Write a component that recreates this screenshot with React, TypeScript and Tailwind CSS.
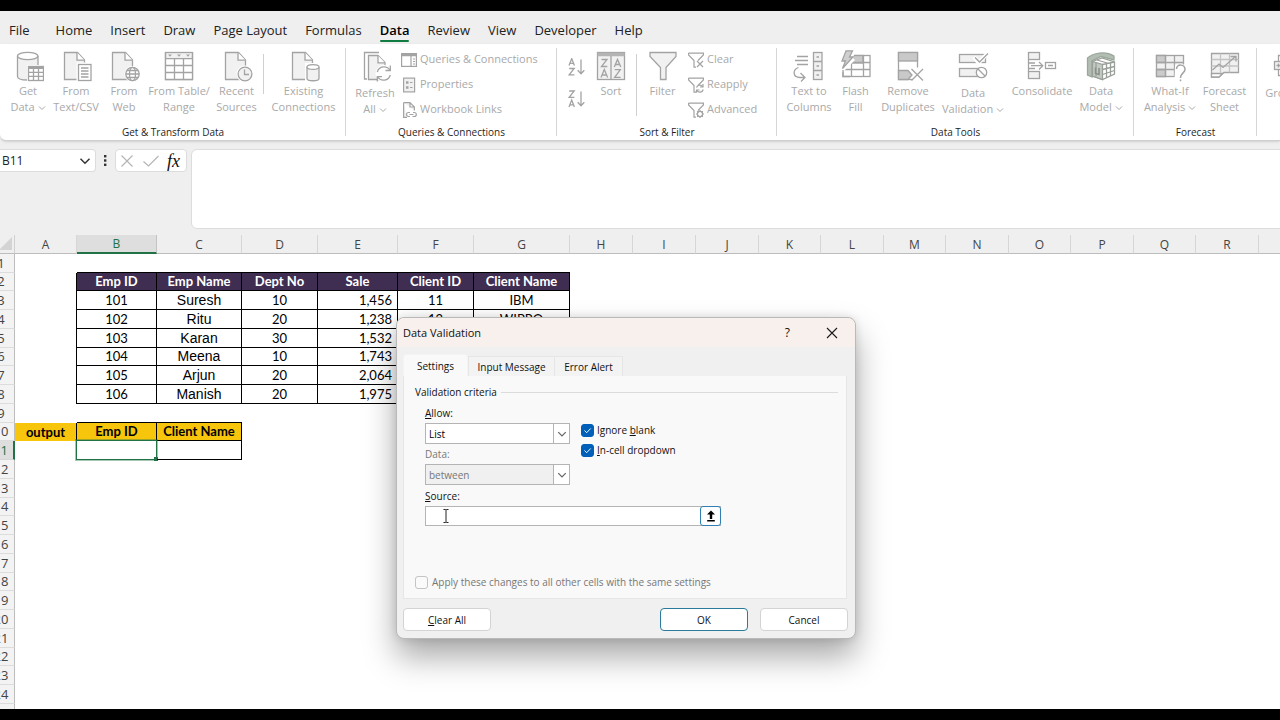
import React from "react";

const LINE = "#a3a3a3";
const FILL = "#f1f1f1";

/* ---------- icons ---------- */

function Svg32({ children }: { children: React.ReactNode }) {
  return (
    <svg width="32" height="32" viewBox="0 0 32 32" fill="none" stroke={LINE} strokeWidth="1.3" aria-hidden="true" className="shrink-0">
      {children}
    </svg>
  );
}

function Svg16({ children }: { children: React.ReactNode }) {
  return (
    <svg width="16" height="16" viewBox="0 0 16 16" fill="none" stroke={LINE} strokeWidth="1.2" aria-hidden="true" className="shrink-0">
      {children}
    </svg>
  );
}

function DocShape() {
  return (
    <>
      <path d="M4.5 2.5H17.5L24.5 10V29.5H4.5Z" fill={FILL} />
      <path d="M17 2.5V10.2H24.5" fill="#fff" />
    </>
  );
}

const GetDataIcon = () => (
  <Svg32>
    <path d="M5.5 6V26.5C5.500 28.8 10 30 15.500 30H26V6" fill={FILL} />
    <ellipse cx="15.7" cy="6" rx="10.2" ry="3.7" fill="#fff" />
    <rect x="15" y="15" width="17" height="17" fill="#fff" stroke="none" />
    <rect x="16.5" y="16.5" width="15" height="14" fill="#fff" />
    <path d="M16.5 17.7H31.5" strokeWidth="2.4" />
    <path d="M16.5 22.3H31.5M16.5 26.4H31.5M21.5 17V30.5M26.5 17V30.5" />
  </Svg32>
);

const TextCsvIcon = () => (
  <Svg32>
    <DocShape />
    <rect x="16.5" y="12.5" width="16" height="19.5" fill="#fff" stroke="none" />
    <rect x="18.5" y="14.5" width="12.5" height="16" fill="#fff" />
    <path d="M21 18H28.5M21 21H28.5M21 24H28.5M21 27H28.5" />
  </Svg32>
);

const WebIcon = () => (
  <Svg32>
    <DocShape />
    <circle cx="24.5" cy="24" r="8" fill="#fff" stroke="none" />
    <circle cx="24.5" cy="24" r="6.7" fill="#fff" />
    <ellipse cx="24.5" cy="24" rx="3" ry="6.7" />
    <path d="M17.8 24H31.2M19 20.5H30M19 27.5H30" />
  </Svg32>
);

const TableRangeIcon = () => (
  <Svg32>
    <rect x="2.5" y="2.5" width="27" height="27" fill={FILL} />
    <rect x="3" y="9" width="26" height="20" fill="#fff" stroke="none" />
    <path d="M2.5 8.7H29.5M2.5 15.5H29.5M2.5 22.5H29.5M11.5 8.7V29.5M20.5 8.7V29.5M2.5 2.5V29.5H29.5V2.5" />
    <path d="M5 4.5H9L7 6.8ZM14 4.5H18L16 6.8ZM23 4.5H27L25 6.8Z" fill={LINE} stroke="none" />
  </Svg32>
);

const RecentIcon = () => (
  <Svg32>
    <DocShape />
    <circle cx="24" cy="24" r="8.5" fill="#fff" stroke="none" />
    <circle cx="24" cy="24" r="6.9" fill={FILL} />
    <path d="M23.5 19.5V24.5H28" />
  </Svg32>
);

const ExistingIcon = () => (
  <Svg32>
    <DocShape />
    <rect x="17" y="13" width="15" height="19" fill="#fff" stroke="none" />
    <path d="M19 17V28.5C19 31.5 31 31.5 31 28.5V17" fill={FILL} />
    <ellipse cx="25" cy="17" rx="6" ry="2.4" fill="#fff" />
  </Svg32>
);

const RefreshIcon = () => (
  <Svg32>
    <path d="M20 2.5H5.5V29H8" />
    <path d="M9.5 5.5H19L26 12.5V29.5H9.5Z" fill={FILL} />
    <path d="M19 5.5V12.8H26" fill="#fff" />
    <circle cx="25" cy="23.5" r="8.5" fill="#fff" stroke="none" />
    <path d="M18.3 22A7 7 0 0 1 31 20.2M31.3 25A7 7 0 0 1 18.7 27" />
    <path d="M31.3 15.5V20.5H26.5M18.3 31.5V26.7H23" />
  </Svg32>
);

const SortIcon = () => (
  <Svg32>
    <rect x="2.5" y="2.5" width="27" height="27" fill={FILL} />
    <path d="M2.5 4.5H29.5" strokeWidth="3.6" stroke="#b4b4b4" />
    <path d="M16 6V29.5" />
    <path d="M6.5 9.5H12L6.5 16.5H12.3M6 27.5L9.3 19.5L12.6 27.5M7.2 25H11.5" />
    <path d="M19.3 17L22.5 9.5L25.8 17M20.5 14.5H24.7M19.7 19.7H25.3L19.7 27.3H25.6" />
  </Svg32>
);

const FilterIcon = () => (
  <Svg32>
    <path d="M3 2.5H29V6.5L19 17.5V29.5H13.5V17.5L3 6.5Z" fill={FILL} />
  </Svg32>
);

const TextColumnsIcon = () => (
  <Svg32>
    <path d="M4 6.5H15M2 10.5H15M4 14.5H15" />
    <path d="M5.5 17.5C-1 20 0 27.5 7 27.5H11M7.5 23L12 27.5L8 31.5" />
    <rect x="20.5" y="2.5" width="8.5" height="27" fill={FILL} />
    <path d="M20.5 11.5H29M20.5 20.5H29M23.5 7H26M23.5 16H26M23.5 25H26" />
  </Svg32>
);

const FlashFillIcon = () => (
  <Svg32>
    <rect x="3" y="5.5" width="27" height="21" fill="#fff" />
    <rect x="10" y="5.5" width="13" height="7.5" fill="#c9c9c9" />
    <path d="M3 12.5H30M3 19.5H30M11.5 5.5V26.5M23.5 5.5V26.5" />
    <path d="M-1 -1H16L13 8L15 10L3 22L-1 23Z" fill="#fff" stroke="none" />
    <path d="M6 .8H12.5L9.5 7H13L2.5 18.5L5.5 11H2Z" fill="#cfcfcf" />
    <path d="M3 20V26.5H10" />
  </Svg32>
);

const RemoveDuplicatesIcon = () => (
  <Svg32>
    <rect x="6.5" y="2.5" width="19" height="27" fill="#fff" />
    <rect x="6.5" y="2.5" width="19" height="8.5" fill="#c9c9c9" />
    <path d="M6.5 20.5H16L20 25L16 29.5H6.5Z" fill="#c9c9c9" />
    <path d="M19 17.5H33V32H19L23 25Z" fill="#fff" stroke="none" />
    <path d="M19.5 19L31 30.5M31 19L19.5 30.5" />
  </Svg32>
);

const ValidationIcon = () => (
  <Svg32>
    <rect x="2.5" y="4.5" width="26" height="8" fill={FILL} />
    <rect x="2.5" y="18.5" width="22" height="8" fill={FILL} />
    <path d="M17 7L21.5 13L31 3" stroke="#fff" strokeWidth="4" />
    <path d="M18 7.5L22.5 12L31 3.5" />
    <circle cx="24.5" cy="22.5" r="5.2" fill="#fff" />
    <path d="M21 19L28 26" />
  </Svg32>
);

const ConsolidateIcon = () => (
  <Svg32>
    <rect x="2.5" y="2.5" width="11" height="7" fill={FILL} />
    <rect x="2.5" y="21.5" width="11" height="7" fill={FILL} />
    <path d="M2.5 9.5V21.5M2.5 13H9M2.5 18.5H9M5 15.7H16.5M13 12L16.8 15.7L13 19.5" />
    <rect x="19.5" y="12.5" width="10" height="6" />
    <path d="M22 15.5H27" />
  </Svg32>
);

const ModelIcon = () => (
  <Svg32>
    <path d="M2.5 8C8 3 20 .5 29 6V10L16 6.5L7 11V27L2.5 25Z" fill="#b3bdb3" stroke="#9aa89a" />
    <path d="M7.5 11.5L17 8L29.5 12V24L17.5 29.5L7.5 26Z" fill="#fff" stroke="#9a9f9a" />
    <path d="M7.5 11.5L17.5 14.5V29.5L7.5 26Z" fill="#c3cac3" stroke="#9a9f9a" />
    <path d="M17.5 14.5L29.5 12M17.5 19.5L29.5 16.5M17.5 24.5L29.5 20.5M21.5 13.5V27.5M25.5 12.8V26M11 12.5V26.5M12 10L24 13.5" stroke="#9a9f9a" />
    <path d="M10.5 17.5V23.5L14 24.5V18" stroke="#8a8f8a" strokeWidth="1.6" />
  </Svg32>
);

const WhatIfIcon = () => (
  <Svg32>
    <rect x="2.5" y="5.5" width="27" height="21" fill={FILL} />
    <path d="M2.5 5.5H11.5V12.5H2.5ZM2.5 19.5H11.5V26.5H2.5Z" fill="#cbcbcb" />
    <path d="M2.5 12.5H29.5M2.5 19.5H29.5M11.5 5.5V26.5M20.5 5.5V26.5" />
    <path d="M21 14.5H33V32H20.5Z" fill="#fff" stroke="none" />
    <path d="M22.5 19C22.5 13.5 31 14 31 19.5C31 23 26.5 23 26.5 28M26.5 29.5V31.3" strokeWidth="1.5" />
  </Svg32>
);

const ForecastIcon = () => (
  <Svg32>
    <path d="M2.5 3.5H29.5V22.5H15L10 27H2.5Z" fill={FILL} />
    <path d="M2.5 9.5H29.5M2.5 16H29.5M11.5 3.5V22.5M20.5 3.5V22.5" stroke="#c4c4c4" />
    <path d="M3.5 20L10 14L14 17.5L26.5 6.5M21.5 6.5H27V11.5" />
    <path d="M2.5 23.5H13.5L10 27H2.5Z" fill="#fff" />
  </Svg32>
);

const GroupIcon = () => (
  <Svg32>
    <rect x="3.5" y="11.5" width="8" height="8" fill={FILL} />
    <path d="M5.5 15.5H9.5M7.5 13.5V17.5M7.5 11.5V5.5H12M7.5 19.5V25.5H12" />
    <rect x="10" y="3" width="19" height="6" fill={FILL} />
    <rect x="10" y="22" width="19" height="6" fill={FILL} />
  </Svg32>
);

const QueriesIcon = () => (
  <Svg16>
    <rect x=".6" y="1.6" width="14.8" height="12.8" fill="#fff" />
    <path d="M.6 3H15.4" strokeWidth="2.6" />
    <path d="M10 3V14.4" />
    <path d="M12 7H14M12 9.5H14M12 12H14" />
  </Svg16>
);
const PropertiesIcon = () => (
  <Svg16>
    <rect x="2.6" y="1.1" width="11" height="13.8" fill={FILL} />
    <path d="M5 5.5H7.5M5 10.5H7.5" strokeWidth="2.4" />
    <path d="M9 5.5H11.5M9 10.5H11.5" />
  </Svg16>
);
const LinksIcon = () => (
  <Svg16>
    <path d="M2.6 .6H9L13.4 5V8.5M6 15.4H2.6V.6M9 .6V5H13.4" fill={FILL} />
    <path d="M9 14.5H7.5A2 2 0 0 1 7.5 10.5H9M12 10.5H13.3A2 2 0 0 1 13.3 14.5H11.5M8.5 12.5H12.5" />
  </Svg16>
);
const Funnel = () => <path d="M.6 1.1H15.4V3L10 8.5M.6 1.1V3L6 8.5V15.2H8" fill="none" />;
const ClearIcon = () => (
  <Svg16>
    <Funnel />
    <path d="M9 9L15 15M15 9L9 15" />
  </Svg16>
);
const ReapplyIcon = () => (
  <Svg16>
    <Funnel />
    <path d="M8.5 10.5A3.4 3.4 0 0 1 14.5 9.5M15.2 12.5A3.4 3.4 0 0 1 9 13.5M15 7V10H12M8.5 15.8V13H11.5" />
  </Svg16>
);
const AdvancedIcon = () => (
  <Svg16>
    <Funnel />
    <circle cx="12" cy="12" r="2.6" />
    <path d="M12 8V10M12 14V16M8 12H10M14 12H16M9.2 9.2L10.5 10.5M13.5 13.5L14.8 14.8M14.8 9.2L13.5 10.5M9.2 14.8L10.5 13.5" />
  </Svg16>
);

function SortArrow({ desc = false }: { desc?: boolean }) {
  const a = "M1 7.5L3.7 .6L6.4 7.5M2 5.3H5.4";
  const z = "M1.2 1H6.2L1.2 7.3H6.4";
  return (
    <svg width="18" height="18" viewBox="0 0 18 18" fill="none" stroke={LINE} strokeWidth="1.3" aria-hidden="true" className="block">
      <path d={desc ? z : a} />
      <path d={desc ? a : z} transform="translate(0 9.5)" />
      <path d="M13 1.5V15.5M9.7 12.3L13 15.7L16.3 12.3" />
    </svg>
  );
}

function Chevron({ size = 8, color = "currentColor" }: { size?: number; color?: string }) {
  return (
    <svg width={size} height={size} viewBox="0 0 8 8" fill="none" stroke={color} strokeWidth="1" className="inline-block" aria-hidden="true">
      <path d="M1 2.500L4 5.500L7 2.500" />
    </svg>
  );
}

/* ---------- ribbon ---------- */

type BigProps = { icon: React.ReactNode; lines: string[]; menu?: boolean; low?: boolean; width: string };

function BigButton({ icon, lines, menu, low, width }: BigProps) {
  return (
    <button type="button" className={`flex shrink-0 flex-col items-center whitespace-nowrap pt-1.5 text-[11px] leading-4 text-[#a9a9a9] ${width}`}>
      {icon}
      <span className={low ? "mt-[3px] text-center" : "mt-px text-center"}>
        {lines.map((line, i) => (
          <span key={line} className="block">
            {line}
            {menu && i === lines.length - 1 && (
              <>
                {" "}
                <Chevron />
              </>
            )}
          </span>
        ))}
      </span>
    </button>
  );
}

function SmallButton({ icon, label }: { icon: React.ReactNode; label: string }) {
  return (
    <button type="button" className="flex h-[25px] items-center gap-[3px] whitespace-nowrap text-[11px] text-[#a9a9a9]">
      {icon}
      {label}
    </button>
  );
}

function Group({ title, width, pad, children }: { title: string; width: string; pad: string; children: React.ReactNode }) {
  return (
    <section aria-label={title} className={`relative flex shrink-0 flex-col ${width}`}>
      <div className={`flex flex-1 items-start ${pad}`}>{children}</div>
      <h2 className="text-center text-[10px] leading-4 text-[#1f1f1f]">{title}</h2>
      <span className="absolute bottom-1 right-0 top-1 w-px bg-[#d6d6d6]" />
    </section>
  );
}

const Divider = ({ className }: { className: string }) => <span className={`mt-2.5 w-px shrink-0 bg-[#d0d0d0] ${className}`} />;

const tabs = ["File", "Home", "Insert", "Draw", "Page Layout", "Formulas", "Data", "Review", "View", "Developer", "Help"];

function TabBar() {
  return (
    <nav className="flex h-[33px] shrink-0 items-center gap-[18px] whitespace-nowrap pl-[9px] pt-1 text-[13px] leading-5 text-[#222]">
      {tabs.map((t) => (
        <a
          key={t}
          href={`#${t}`}
          className={t === "Data" ? "relative font-semibold text-black" : t === "File" ? "mr-2" : ""}
        >
          {t}
          {t === "Data" && <span className="absolute inset-x-0 -bottom-0.5 h-0.5 rounded bg-[#107c41]" />}
        </a>
      ))}
    </nav>
  );
}

function Ribbon() {
  return (
    <div className="flex h-[97px] shrink-0 overflow-hidden rounded-bl-md border-b border-[#cfcfcf] bg-white shadow-sm">
      <Group title="Get & Transform Data" width="w-[346px]" pad="pl-1">
        <BigButton width="w-12" icon={<GetDataIcon />} lines={["Get", "Data"]} menu />
        <BigButton width="w-12" icon={<TextCsvIcon />} lines={["From", "Text/CSV"]} />
        <BigButton width="w-12" icon={<WebIcon />} lines={["From", "Web"]} />
        <BigButton width="w-[62px]" icon={<TableRangeIcon />} lines={["From Table/", "Range"]} />
        <BigButton width="w-[53px]" icon={<RecentIcon />} lines={["Recent", "Sources"]} />
        <Divider className="h-10" />
        <BigButton width="w-[79px]" icon={<ExistingIcon />} lines={["Existing", "Connections"]} />
      </Group>
      <Group title="Queries & Connections" width="w-[211px]" pad="pl-[3px]">
        <BigButton width="w-[52px]" icon={<RefreshIcon />} lines={["Refresh", "All"]} menu low />
        <div className="pt-[3px]">
          <SmallButton icon={<QueriesIcon />} label="Queries & Connections" />
          <SmallButton icon={<PropertiesIcon />} label="Properties" />
          <SmallButton icon={<LinksIcon />} label="Workbook Links" />
        </div>
      </Group>
      <Group title="Sort & Filter" width="w-[220px]" pad="pl-[11px]">
        <div className="flex flex-col gap-3.5 pt-3.5">
          <button type="button" aria-label="Sort A to Z"><SortArrow /></button>
          <button type="button" aria-label="Sort Z to A"><SortArrow desc /></button>
        </div>
        <BigButton width="w-[50px]" icon={<SortIcon />} lines={["Sort"]} />
        <Divider className="h-[62px]" />
        <BigButton width="w-[51px]" icon={<FilterIcon />} lines={["Filter"]} />
        <div className="pt-[3px]">
          <SmallButton icon={<ClearIcon />} label="Clear" />
          <SmallButton icon={<ReapplyIcon />} label="Reapply" />
          <SmallButton icon={<AdvancedIcon />} label="Advanced" />
        </div>
      </Group>
      <Group title="Data Tools" width="w-[357px]" pad="pl-2">
        <BigButton width="w-12" icon={<TextColumnsIcon />} lines={["Text to", "Columns"]} />
        <BigButton width="w-[45px]" icon={<FlashFillIcon />} lines={["Flash", "Fill"]} />
        <BigButton width="w-[60px]" icon={<RemoveDuplicatesIcon />} lines={["Remove", "Duplicates"]} />
        <BigButton width="w-[70px]" icon={<ValidationIcon />} lines={["Data", "Validation"]} menu low />
        <BigButton width="w-[68px]" icon={<ConsolidateIcon />} lines={["Consolidate"]} />
        <BigButton width="w-[50px]" icon={<ModelIcon />} lines={["Data", "Model"]} menu />
      </Group>
      <Group title="Forecast" width="w-[123px]" pad="pl-2">
        <BigButton width="w-14" icon={<WhatIfIcon />} lines={["What-If", "Analysis"]} menu />
        <BigButton width="w-[53px]" icon={<ForecastIcon />} lines={["Forecast", "Sheet"]} />
      </Group>
      <div className="flex shrink-0 pl-1.5">
        <BigButton width="w-12" icon={<GroupIcon />} lines={["Group"]} menu low />
      </div>
    </div>
  );
}

/* ---------- formula bar ---------- */

function FormulaBar() {
  return (
    <div className="flex h-[94px] shrink-0 items-start pt-2">
      <div className="flex h-[23px] w-24 items-center rounded-r border border-l-0 border-[#dcdcdc] bg-white pr-1">
        <input aria-label="Name box" defaultValue="B11" className="min-w-0 flex-1 bg-transparent pl-0.5 text-[12px] text-[#222] outline-none" />
        <Chevron size={12} color="#333" />
      </div>
      <svg width="19" height="23" viewBox="0 0 19 23" fill="#333" aria-hidden="true" className="shrink-0">
        <rect x="8" y="6" width="2.4" height="2.4" />
        <rect x="8" y="10.3" width="2.4" height="2.4" />
        <rect x="8" y="14.6" width="2.4" height="2.4" />
      </svg>
      <div className="flex h-[23px] w-[72px] shrink-0 items-center justify-between rounded border border-[#dcdcdc] bg-white px-1">
        <button type="button" aria-label="Cancel entry">
          <svg width="14" height="14" viewBox="0 0 14 14" stroke="#b5b5b5" strokeWidth="1.2" className="block"><path d="M1.5 1.5L12.5 12.5M12.5 1.5L1.5 12.5" /></svg>
        </button>
        <button type="button" aria-label="Enter">
          <svg width="18" height="14" viewBox="0 0 18 14" fill="none" stroke="#b5b5b5" strokeWidth="1.2" className="block"><path d="M1.5 7.5L6.5 12L16.5 2" /></svg>
        </button>
        <button type="button" aria-label="Insert function" className="pr-0.5 font-['Liberation_Serif',serif] text-[18px] italic leading-5 text-[#111]">
          fx
        </button>
      </div>
      <textarea aria-label="Formula bar" className="-mr-2 ml-1 h-20 min-w-0 flex-1 resize-none rounded-md border border-[#dcdcdc] bg-white outline-none" />
    </div>
  );
}

/* ---------- sheet ---------- */

const columns = [
  { id: "A", w: "w-[62px]" },
  { id: "B", w: "w-[80px]" },
  { id: "C", w: "w-[85px]" },
  { id: "D", w: "w-[76px]" },
  { id: "E", w: "w-[80px]" },
  { id: "F", w: "w-[76px]" },
  { id: "G", w: "w-[96px]" },
  { id: "H", w: "w-[63px]" },
  { id: "I", w: "w-[63px]" },
  { id: "J", w: "w-[63px]" },
  { id: "K", w: "w-[62px]" },
  { id: "L", w: "w-[63px]" },
  { id: "M", w: "w-[62px]" },
  { id: "N", w: "w-[63px]" },
  { id: "O", w: "w-[62px]" },
  { id: "P", w: "w-[63px]" },
  { id: "Q", w: "w-[62px]" },
  { id: "R", w: "w-[63px]" },
  { id: "S", w: "w-[63px]" },
];

const cells: Record<number, string[]> = {
  2: ["", "Emp ID", "Emp Name", "Dept No", "Sale", "Client ID", "Client Name"],
  3: ["", "101", "Suresh", "10", "1,456", "11", "IBM"],
  4: ["", "102", "Ritu", "20", "1,238", "12", "WIPRO"],
  5: ["", "103", "Karan", "30", "1,532"],
  6: ["", "104", "Meena", "10", "1,743"],
  7: ["", "105", "Arjun", "20", "2,064"],
  8: ["", "106", "Manish", "20", "1,975"],
  10: ["output", "Emp ID", "Client Name"],
};

function cellStyle(r: number, c: number) {
  const cls: string[] = [];
  const inMain = r >= 2 && r <= 8;
  const inOut = r === 10 || r === 11;
  const right = (inMain && c <= 6) || (inOut && c <= 2);
  const bottom =
    (r === 1 && c >= 1 && c <= 6) ||
    (inMain && c >= 1 && c <= 6) ||
    (r === 9 && c >= 1 && c <= 2) ||
    (inOut && c >= 1 && c <= 2);
  if (right) cls.push("border-r border-r-black");
  if (bottom) cls.push("border-b border-b-black");
  if (r === 2 && c >= 1 && c <= 6) cls.push("bg-[#3f2d52] font-bold text-white");
  if (r === 10 && c <= 2) cls.push("bg-[#f7c50c] font-bold");
  if (r >= 3 && r <= 8 && c === 2) cls.push("font-['Liberation_Sans',sans-serif] text-[14px]");
  cls.push(r >= 3 && r <= 8 && c === 4 ? "text-right pr-[5px]" : "text-center");
  return cls.join(" ");
}

function Sheet() {
  const rows = Array.from({ length: 25 }, (_, i) => i + 1);
  return (
    <main className="min-h-0 flex-1 overflow-hidden bg-white">
      <table className="-ml-3 w-max table-fixed border-separate border-spacing-0">
        <thead>
          <tr className="h-[19px] text-[12px] leading-[17px] text-[#444]">
            <th className="w-[27px] border-b border-r border-b-[#bdbdbd] border-r-[#d0d0d0] bg-[#efefef] p-0">
              <svg width="24" height="14" viewBox="0 0 24 14" aria-hidden="true" className="block"><path d="M24 0V13H11Z" fill="#d4d4d4" /></svg>
            </th>
            {columns.map(({ id, w }) => (
              <th
                key={id}
                className={`${w} p-0 font-normal ${
                  id === "B"
                    ? "border-b-2 border-r border-b-[#217346] border-r-[#c4c4c4] bg-[#dedede] text-[#217346]"
                    : "border-b border-r border-b-[#bdbdbd] border-r-[#d6d6d6] bg-[#efefef]"
                }`}
              >
                {id}
              </th>
            ))}
          </tr>
        </thead>
        <tbody className="font-[Lato,'Liberation_Sans',sans-serif] text-[13px] leading-[17px] text-black">
          {rows.map((r) => (
            <tr key={r} className={r % 4 === 2 ? "h-[18px]" : "h-[19px]"}>
              <th
                className={`p-0 text-center font-['Open_Sans',sans-serif] font-normal ${
                  r === 11
                    ? "border-b border-r-2 border-b-[#d6d6d6] border-r-[#217346] bg-[#dedede] text-[#217346]"
                    : "border-b border-r border-b-[#dcdcdc] border-r-[#bdbdbd] bg-[#f3f3f3] text-[#444]"
                }`}
              >
                {r}
              </th>
              {columns.map(({ id }, c) => (
                <td key={id} className={`relative whitespace-nowrap p-0 ${cellStyle(r, c)}`}>
                  {cells[r]?.[c]}
                  {r === 11 && c === 1 && (
                    <span className="absolute -inset-px border border-[#217346] outline outline-[#217346]/40">
                      <span className="absolute -bottom-0.5 -right-0.5 size-1 bg-[#217346]" />
                    </span>
                  )}
                </td>
              ))}
            </tr>
          ))}
        </tbody>
      </table>
    </main>
  );
}

/* ---------- dialog ---------- */

function Picker({ id, value, disabled }: { id: string; value: string; disabled?: boolean }) {
  return (
    <div className="relative h-[21px] w-[145px]">
      <select
        id={id}
        disabled={disabled}
        className={`block size-full appearance-none border border-[#b4b4b4] pl-[3px] text-[10px] leading-4 opacity-100 outline-none ${
          disabled ? "bg-[#f0f0f0] text-[#777]" : "bg-white text-black"
        }`}
      >
        <option>{value}</option>
      </select>
      <span className="pointer-events-none absolute inset-y-px right-px flex w-4 items-center justify-center border-l border-[#b4b4b4] bg-white">
        <Chevron size={10} color="#666" />
      </span>
    </div>
  );
}

function Tick({ children }: { children: React.ReactNode }) {
  return (
    <label className="flex h-5 items-center gap-[3px]">
      <span className="relative size-[13px]">
        <input type="checkbox" defaultChecked className="peer block size-[13px] appearance-none rounded-[3px] border border-[#8a8a8a] bg-white checked:border-[#005fb8] checked:bg-[#005fb8]" />
        <svg viewBox="0 0 13 13" fill="none" stroke="#fff" className="pointer-events-none absolute inset-0 hidden peer-checked:block" aria-hidden="true">
          <path d="M3.5 6.5L5.7 8.7L9.7 4.5" />
        </svg>
      </span>
      <span>{children}</span>
    </label>
  );
}

const dialogButton = "h-[23px] w-[88px] rounded border bg-white text-center leading-4";

function ValidationDialog() {
  return (
    <div
      role="dialog"
      aria-label="Data Validation"
      className="absolute left-[396px] top-[317px] w-[460px] rounded-lg border border-[#b9b9b9] bg-[#f0f0f0] pb-[7px] text-[10px] leading-4 text-[#111] shadow-[0_18px_32px_rgba(0,0,0,0.34),0_0_10px_rgba(0,0,0,0.12)]"
    >
      <header className="flex h-[29px] items-center rounded-t-lg bg-[#f7f0ec] pl-1.5 pr-[17px]">
        <h1 className="flex-1 text-[11px]">Data Validation</h1>
        <button type="button" aria-label="Help" className="mr-9 text-[12px]">?</button>
        <button type="button" aria-label="Close">
          <svg width="12" height="12" viewBox="0 0 12 12" stroke="#1a1a1a" strokeWidth="1.1" className="block"><path d="M1 1L11 11M11 1L1 11" /></svg>
        </button>
      </header>

      <div className="pl-1.5 pr-[7px] pt-[7px]">
        <div role="tablist" className="flex items-end">
          <button type="button" role="tab" aria-selected="true" className="h-[22px] w-[65px] rounded-t-sm border border-b-0 border-[#f4f4f4] bg-[#f9f9f9]">Settings</button>
          <button type="button" role="tab" aria-selected="false" className="h-5 w-[87px] border border-b-0 border-[#e6e6e6] bg-[#f3f3f3]">Input Message</button>
          <button type="button" role="tab" aria-selected="false" className="h-5 w-[68px] border border-b-0 border-l-0 border-[#e6e6e6] bg-[#f3f3f3]">Error Alert</button>
        </div>

        <div role="tabpanel" className="mr-px border border-t-0 border-[#e6e6e6] bg-[#f9f9f9] pb-2 pl-[11px] pr-2 pt-2">
          <div className="flex items-center gap-1">
            <h2>Validation criteria</h2>
            <span className="h-px flex-1 bg-[#dcdcdc]" />
          </div>

          <div className="flex gap-[11px] pl-2.5 pt-[5px]">
            <div>
              <label htmlFor="allow" className="block h-[18px]"><u>A</u>llow:</label>
              <Picker id="allow" value="List" />
              <label htmlFor="data" className="block h-5 pt-0.5 text-[#777]">Data:</label>
              <Picker id="data" value="between" disabled />
            </div>
            <div className="pt-[15px]">
              <Tick>Ignore <u>b</u>lank</Tick>
              <Tick><u>I</u>n-cell dropdown</Tick>
            </div>
          </div>

          <div className="pl-2.5 pt-[3px]">
            <label htmlFor="source" className="block h-[18px]"><u>S</u>ource:</label>
            <div className="relative flex h-5 w-[296px] border border-[#b4b4b4] bg-white">
              <input id="source" className="min-w-0 flex-1 bg-transparent px-1 outline-none" />
              <button type="button" aria-label="Collapse dialog" className="-my-px -mr-px flex w-[21px] items-center justify-center rounded-[3px] border border-[#2f7fb5] bg-white">
                <svg width="10" height="12" viewBox="0 0 10 12" aria-hidden="true"><path d="M5 .5L9 4.5H6.2V9H3.8V4.5H1ZM1.2 10H8.8V11.5H1.2Z" fill="#000" /></svg>
              </button>
              <svg width="8" height="14" viewBox="0 0 8 14" fill="none" stroke="#222" aria-hidden="true" className="pointer-events-none absolute left-4 top-0.5">
                <path d="M1.5 .5H3.5L4 1L4.5 .5H6.5M4 1V13M1.5 13.5H3.5L4 13L4.5 13.5H6.5" />
              </svg>
            </div>
          </div>

          <label className="mt-12 flex items-center gap-1 text-[#777]">
            <input type="checkbox" disabled className="size-[13px] appearance-none rounded-[3px] border border-[#c4c4c4] bg-[#fafafa]" />
            Apply these changes to all other cells with the same settings
          </label>
        </div>

        <div className="mt-[9px] flex">
          <button type="button" className={`${dialogButton} border-[#d3d3d3]`}><u>C</u>lear All</button>
          <button type="button" className={`${dialogButton} ml-auto mr-3 border-[#2a7a9c]`}>OK</button>
          <button type="button" className={`${dialogButton} border-[#d3d3d3]`}>Cancel</button>
        </div>
      </div>
    </div>
  );
}

export default function App() {
  return (
    <div className="flex h-screen flex-col overflow-hidden border-b-[11px] border-t-[11px] border-black bg-[#efefef] font-['Open_Sans','Noto_Sans',sans-serif]">
      <TabBar />
      <Ribbon />
      <FormulaBar />
      <Sheet />
      <ValidationDialog />
    </div>
  );
}
